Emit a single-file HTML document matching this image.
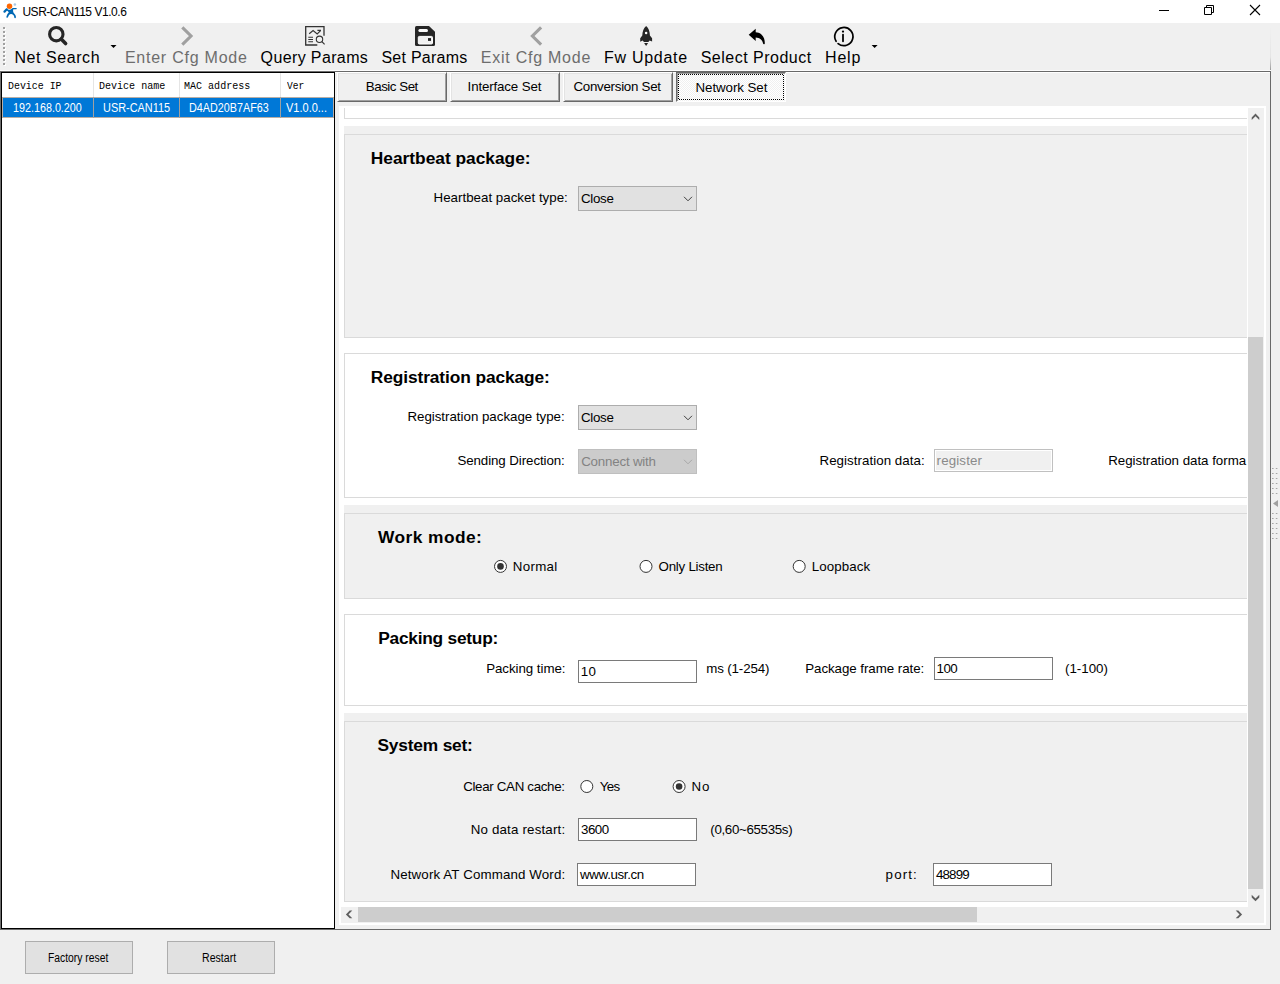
<!DOCTYPE html>
<html><head><meta charset="utf-8"><title>USR-CAN115 V1.0.6</title>
<style>
html,body{margin:0;padding:0}
body{width:1280px;height:984px;position:relative;overflow:hidden;background:#f0f0f0;font-family:"Liberation Sans",sans-serif;color:#000}
.a{position:absolute;box-sizing:border-box}
.t{position:absolute;white-space:pre;line-height:1}
svg{position:absolute;overflow:visible}
.combo{background:#e1e1e1;border:1px solid #adadad}
.combo.dis{background:#cccccc;border-color:#bfbfbf}
.inp{background:#fff;border:1px solid #7a7a7a}
.inp.dis{background:#f0f0f0;border:1px solid #c0c0c0;box-shadow:inset 0 0 0 1px #fff}
.btn{background:#e1e1e1;border:1px solid #adadad}
.tab{border-style:solid;border-width:1px;border-color:#fff #696969 #696969 #fff;box-shadow:inset 1px 1px 0 #e3e3e3,inset -1px -1px 0 #a0a0a0;background:#f0f0f0}
.wp{background:#fff;border:1px solid #dadada}
.gp{background:#f0f0f0}
.gp>i{position:absolute;left:0;top:8px;right:0;bottom:0;border:1px solid #dadada;box-sizing:border-box}
</style></head><body>

<!-- title bar -->
<div class="a" style="left:0;top:0;width:1280px;height:23px;background:#fff"></div>
<svg style="left:0;top:0" width="24" height="23" viewBox="0 0 24 23">
 <circle cx="14.9" cy="4.5" r="1.3" fill="#a9c9e6"/>
 <path d="M6.8 9.3 L4.5 11.6" stroke="#0068b4" stroke-width="2.2" stroke-linecap="round" fill="none"/>
 <path d="M6.2 8.6 C8 10.4 11 10.2 12.6 8 L16.2 8 C17 8 17 9.2 16.2 9.2 L13.3 9.3 C12.6 11.5 13.5 13 15 14.6 C15.8 15.6 16 16.6 15.9 17.6 C15.8 18.4 14.4 18.4 14.3 17.6 C14.2 16 13.4 14.4 11.4 14.1 C9.4 13.9 8.7 15.4 8 17.2 C7.7 18 6.1 17.7 6.4 16.7 C6.9 14.6 7.6 13.4 8.8 12.4 C8.3 11.2 7.2 10.6 5.6 9.9 Z" fill="#0068b4"/>
 <circle cx="9.5" cy="6.2" r="2.75" fill="#ff6600"/>
</svg>
<svg style="left:1150px;top:0" width="130" height="23" viewBox="1150 0 130 23" fill="none" stroke="#000" stroke-width="1">
 <path d="M1159 10.5 H1169"/>
 <path d="M1204.5 7.5 h7 v7 h-7 z"/>
 <path d="M1206.5 7.5 v-2 h7 v7 h-2"/>
 <path d="M1250 5 L1260 15 M1260 5 L1250 15" stroke-width="1.1"/>
</svg>

<!-- toolbar -->
<div class="a" style="left:0;top:70px;width:1271px;height:1px;background:#fcfcfc"></div>
<div class="a" style="left:1270px;top:27px;width:1px;height:43px;background:linear-gradient(#f0f0f0,#e4e4e4 70%,#9a9a9a)"></div>
<svg style="left:0;top:23px" width="10" height="47" viewBox="0 23 10 47">
 <g fill="#fff"><rect x="4" y="28" width="2" height="2"/><rect x="4" y="32" width="2" height="2"/><rect x="4" y="36" width="2" height="2"/><rect x="4" y="40" width="2" height="2"/><rect x="4" y="44" width="2" height="2"/><rect x="4" y="48" width="2" height="2"/><rect x="4" y="52" width="2" height="2"/><rect x="4" y="56" width="2" height="2"/><rect x="4" y="60" width="2" height="2"/><rect x="4" y="64" width="2" height="2"/></g>
 <g fill="#a0a0a0"><rect x="3" y="27" width="2" height="2"/><rect x="3" y="31" width="2" height="2"/><rect x="3" y="35" width="2" height="2"/><rect x="3" y="39" width="2" height="2"/><rect x="3" y="43" width="2" height="2"/><rect x="3" y="47" width="2" height="2"/><rect x="3" y="51" width="2" height="2"/><rect x="3" y="55" width="2" height="2"/><rect x="3" y="59" width="2" height="2"/><rect x="3" y="63" width="2" height="2"/></g>
</svg>
<svg style="left:0;top:23px" width="900" height="47" viewBox="0 23 900 47">
 <!-- search -->
 <circle cx="56.3" cy="34.2" r="6.7" fill="none" stroke="#262626" stroke-width="3.1"/>
 <path d="M61.4 39.3 L65.6 43.5" stroke="#262626" stroke-width="3.6" stroke-linecap="round"/>
 <path d="M110.5 45 h6 l-3 3 z" fill="#000"/>
 <!-- enter cfg chevron -->
 <path d="M182.3 27.4 L191 36 L182.3 44.6" fill="none" stroke="#a0a0a0" stroke-width="3.1"/>
 <!-- query params -->
 <g fill="none" stroke="#333" stroke-width="1.3">
  <path d="M324 35.8 V26.7 H305.7 V45 H317.3"/>
  <path d="M309.2 33.8 L313.1 30.5 L317.2 33.9 L320.6 30.6 M317.4 30.4 H321" stroke-width="1.2"/>
  <path d="M308.3 37.2 H313 M308.3 39.5 H313 M308.3 41.8 H313" stroke-width="1.1"/>
  <circle cx="319.5" cy="39.3" r="3.2" stroke-width="1.1"/>
  <path d="M321.9 41.7 L324.6 44.4" stroke-width="1.2"/>
 </g>
 <!-- set params floppy -->
 <path d="M416.5 26 H429 L435 31.8 V44.4 Q435 45.9 433.5 45.9 H416.5 Q415 45.9 415 44.4 V27.5 Q415 26 416.5 26 Z" fill="#262626"/>
 <rect x="418.4" y="28.9" width="9.6" height="3.1" rx="1.5" fill="#fafafa"/>
 <rect x="418.3" y="36.4" width="14.2" height="7.6" rx="1" fill="#f0f0f0" stroke="#fff" stroke-width="1"/>
 <rect x="428" y="38.1" width="3" height="2.8" fill="#222"/>
 <!-- exit cfg chevron -->
 <path d="M541.1 27.4 L532.4 36 L541.1 44.6" fill="none" stroke="#a0a0a0" stroke-width="3.1"/>
 <!-- rocket -->
 <path d="M646.15 25.9 C648.6 28 649.9 31.5 649.9 35.6 L652.1 38.2 V41.6 L649.6 40.6 L648.4 42 H643.9 L642.7 40.6 L640.2 41.8 V38.2 L642.3 35.6 C642.3 31.5 643.7 28 646.15 25.9 Z" fill="#262626"/>
 <circle cx="646.15" cy="33.1" r="1.25" fill="#fff"/>
 <path d="M644.1 43.1 H648.1 L646.1 46 Z" fill="#262626"/>
 <!-- reply arrow -->
 <path d="M748.7 34.8 L755.7 28.7 V32.2 C761.5 32.4 764.8 37 764.8 43.2 C764.8 44.4 763.2 44.5 763 43.3 C762.4 40 759.8 37.6 755.7 37.5 V41 Z" fill="#000"/>
 <!-- info -->
 <path d="M838.1 43.6 A9.1 9.1 0 1 0 836.1 41.3" fill="none" stroke="#000" stroke-width="1.7" stroke-linecap="round"/>
 <circle cx="843" cy="31.6" r="1.15" fill="#000"/>
 <path d="M843 34.6 V41.3" stroke="#000" stroke-width="1.8" stroke-linecap="round"/>
 <path d="M871.6 45 h6 l-3 3 z" fill="#000"/>
</svg>

<!-- left list -->
<div class="a" style="left:0;top:71px;width:335px;height:859px;background:#6d6d6d"></div>
<div class="a" style="left:1px;top:72px;width:334px;height:857px;background:#fff;border:1px solid #000"></div>
<div class="a" style="left:93px;top:73px;width:1px;height:24px;background:#e5e5e5"></div>
<div class="a" style="left:179px;top:73px;width:1px;height:24px;background:#e5e5e5"></div>
<div class="a" style="left:280px;top:73px;width:1px;height:24px;background:#e5e5e5"></div>
<div class="a" style="left:2px;top:97px;width:332px;height:21px;background:#0078d7;border:1px solid #b8aea6"></div>
<div class="a" style="left:93px;top:97px;width:1px;height:21px;background:#a0a0a0"></div>
<div class="a" style="left:179px;top:97px;width:1px;height:21px;background:#a0a0a0"></div>
<div class="a" style="left:280px;top:97px;width:1px;height:21px;background:#a0a0a0"></div>

<!-- tab frame -->
<div class="a" style="left:335px;top:71px;width:936px;height:859px;border:1px solid #696969;border-left:none;box-shadow:inset 0 1px 0 #fff"></div>
<!-- tabs -->
<div class="a tab" style="left:337px;top:72px;width:110px;height:30px"></div>
<div class="a tab" style="left:450px;top:72px;width:110px;height:30px"></div>
<div class="a tab" style="left:563px;top:72px;width:110px;height:30px"></div>
<div class="a" style="left:676px;top:72px;width:110px;height:30px;border-style:solid;border-width:1px;border-color:#696969 #fff #fff #696969;box-shadow:inset 1px 1px 0 #a0a0a0;background-image:conic-gradient(#fff 25%,#f0f0f0 0 50%,#fff 0 75%,#f0f0f0 0);background-size:2px 2px"></div>
<div class="a" style="left:678px;top:74px;width:106px;height:1px;background:repeating-linear-gradient(90deg,#000 0 1px,transparent 1px 2px)"></div>
<div class="a" style="left:678px;top:99px;width:106px;height:1px;background:repeating-linear-gradient(90deg,transparent 0 1px,#000 1px 2px)"></div>
<div class="a" style="left:678px;top:74px;width:1px;height:26px;background:repeating-linear-gradient(180deg,#000 0 1px,transparent 1px 2px)"></div>
<div class="a" style="left:783px;top:74px;width:1px;height:26px;background:repeating-linear-gradient(180deg,transparent 0 1px,#000 1px 2px)"></div>

<!-- scroll area -->
<div class="a" style="left:339px;top:106px;width:927px;height:819px;background:#fff"></div>
<div class="a" style="left:341px;top:108px;width:906px;height:799px;overflow:hidden;background:#fff">
 <div class="a wp" style="left:3px;top:-20px;width:1100px;height:31px"></div>
 <div class="a gp" style="left:3px;top:18px;width:1100px;height:212px"><i></i></div>
 <div class="a wp" style="left:3px;top:245px;width:1100px;height:145px"></div>
 <div class="a gp" style="left:3px;top:397px;width:1100px;height:94px"><i></i></div>
 <div class="a wp" style="left:3px;top:506px;width:1100px;height:92px"></div>
 <div class="a gp" style="left:3px;top:605px;width:1100px;height:189px"><i></i></div>

 <!-- heartbeat -->
 <div class="a combo" style="left:237px;top:78px;width:119px;height:25px"></div>
 <!-- registration -->
 <div class="a combo" style="left:237px;top:297px;width:119px;height:25px"></div>
 <div class="a combo dis" style="left:237px;top:341px;width:119px;height:25px"></div>
 <div class="a inp dis" style="left:593px;top:341px;width:119px;height:23px"></div>
 <!-- packing -->
 <div class="a inp" style="left:237px;top:552px;width:119px;height:23px"></div>
 <div class="a inp" style="left:593px;top:549px;width:119px;height:23px"></div>
 <!-- system -->
 <div class="a inp" style="left:237px;top:710px;width:119px;height:23px"></div>
 <div class="a inp" style="left:236px;top:755px;width:119px;height:23px"></div>
 <div class="a inp" style="left:592px;top:755px;width:119px;height:23px"></div>
 <svg style="left:0;top:0" width="906" height="799" viewBox="341 108 906 799">
  <g fill="none" stroke="#404040" stroke-width="1">
   <path d="M684 196.8 L688 200.8 L692 196.8"/>
   <path d="M684 415.8 L688 419.8 L692 415.8"/>
   <path d="M684 459.8 L688 463.8 L692 459.8" stroke="#a8a8a8"/>
  </g>
  <g fill="#fff" stroke="#333" stroke-width="1">
   <circle cx="500.5" cy="566.4" r="6"/><circle cx="646" cy="566.4" r="6"/><circle cx="799.2" cy="566.4" r="6"/>
   <circle cx="586.8" cy="786.5" r="6"/><circle cx="679.1" cy="786.5" r="6"/>
  </g>
  <circle cx="500.5" cy="566.4" r="3.3" fill="#333"/><circle cx="679.1" cy="786.5" r="3.3" fill="#333"/>
 </svg>
<span class="t" style="left:29.80px;top:42px;font-size:17.33px;letter-spacing:-0.006px;font-weight:700">Heartbeat package:</span>
<span class="t" style="left:92.50px;top:83px;font-size:13.33px;letter-spacing:0.010px">Heartbeat packet type:</span>
<span class="t" style="left:240.00px;top:84px;font-size:13.33px;letter-spacing:-0.300px">Close</span>
<span class="t" style="left:29.80px;top:261px;font-size:17.33px;letter-spacing:-0.100px;font-weight:700">Registration package:</span>
<span class="t" style="left:66.40px;top:302px;font-size:13.33px;letter-spacing:-0.020px">Registration package type:</span>
<span class="t" style="left:240.00px;top:303px;font-size:13.33px;letter-spacing:-0.300px">Close</span>
<span class="t" style="left:116.40px;top:346px;font-size:13.33px;letter-spacing:-0.088px">Sending Direction:</span>
<span class="t" style="left:240.20px;top:347px;font-size:13.33px;letter-spacing:-0.200px;color:#838383">Connect with</span>
<span class="t" style="left:478.50px;top:346px;font-size:13.33px;letter-spacing:0.041px">Registration data:</span>
<span class="t" style="left:595.60px;top:346px;font-size:13.33px;letter-spacing:0.129px;color:#8a8a8a">register</span>
<span class="t" style="left:767.20px;top:346px;font-size:13.33px;letter-spacing:-0.027px">Registration data forma</span>
<span class="t" style="left:37.00px;top:421px;font-size:17.33px;letter-spacing:0.444px;font-weight:700">Work mode:</span>
<span class="t" style="left:171.75px;top:452px;font-size:13.33px;letter-spacing:0.300px">Normal</span>
<span class="t" style="left:317.60px;top:452px;font-size:13.33px;letter-spacing:-0.260px">Only Listen</span>
<span class="t" style="left:470.70px;top:452px;font-size:13.33px;letter-spacing:0.114px">Loopback</span>
<span class="t" style="left:37.20px;top:522px;font-size:17.33px;letter-spacing:-0.246px;font-weight:700">Packing setup:</span>
<span class="t" style="left:145.20px;top:554px;font-size:13.33px;letter-spacing:-0.058px">Packing time:</span>
<span class="t" style="left:239.75px;top:557px;font-size:13.33px;letter-spacing:0.250px">10</span>
<span class="t" style="left:365.20px;top:554px;font-size:13.33px;letter-spacing:-0.133px">ms (1-254)</span>
<span class="t" style="left:464.20px;top:554px;font-size:13.33px;letter-spacing:-0.056px">Package frame rate:</span>
<span class="t" style="left:595.50px;top:554px;font-size:13.33px;letter-spacing:-0.500px">100</span>
<span class="t" style="left:724.00px;top:554px;font-size:13.33px;letter-spacing:0.000px">(1-100)</span>
<span class="t" style="left:36.50px;top:629px;font-size:17.33px;letter-spacing:-0.190px;font-weight:700">System set:</span>
<span class="t" style="left:122.20px;top:672px;font-size:13.33px;letter-spacing:-0.327px">Clear CAN cache:</span>
<span class="t" style="left:258.70px;top:672px;font-size:13.33px;letter-spacing:-0.600px">Yes</span>
<span class="t" style="left:350.60px;top:672px;font-size:13.33px;letter-spacing:0.900px">No</span>
<span class="t" style="left:129.70px;top:715px;font-size:13.33px;letter-spacing:0.173px">No data restart:</span>
<span class="t" style="left:240.00px;top:715px;font-size:13.33px;letter-spacing:-0.500px">3600</span>
<span class="t" style="left:369.30px;top:715px;font-size:13.33px;letter-spacing:-0.333px">(0,60~65535s)</span>
<span class="t" style="left:49.50px;top:760px;font-size:13.33px;letter-spacing:0.122px">Network AT Command Word:</span>
<span class="t" style="left:239.10px;top:760px;font-size:13.33px;letter-spacing:-0.367px">www.usr.cn</span>
<span class="t" style="left:544.60px;top:760px;font-size:13.33px;letter-spacing:1.125px">port:</span>
<span class="t" style="left:595.10px;top:760px;font-size:13.33px;letter-spacing:-0.900px">48899</span>
</div>
<!-- v scrollbar -->
<div class="a" style="left:1248px;top:108px;width:16px;height:815px;background:#f0f0f0"></div>
<div class="a" style="left:1248px;top:337px;width:15px;height:552px;background:#cdcdcd"></div>
<!-- h scrollbar -->
<div class="a" style="left:341px;top:907px;width:907px;height:16px;background:#f0f0f0"></div>
<div class="a" style="left:358px;top:907px;width:619px;height:15px;background:#cdcdcd"></div>
<svg style="left:335px;top:100px" width="940" height="830" viewBox="335 100 940 830" fill="#5f5f5f">
 <path d="M1255.5 113.6 L1259.3 117.4 V120 L1255.5 116.2 L1251.7 120 V117.4 Z"/>
 <path d="M1255.5 901.2 L1259.3 897.4 V894.8 L1255.5 898.6 L1251.7 894.8 V897.4 Z"/>
 <path d="M345.9 914.4 L349.7 910.6 H352.3 L348.5 914.4 L352.3 918.2 H349.7 Z"/>
 <path d="M1242.1 914.4 L1238.3 910.6 H1235.7 L1239.5 914.4 L1235.7 918.2 H1238.3 Z"/>
</svg>

<!-- right collapse grip -->
<svg style="left:1270px;top:460px" width="10" height="90" viewBox="1270 460 10 90" fill="#a6a6a6"><rect x="1272" y="468" width="1.6" height="1"/><rect x="1275.8" y="468" width="1.6" height="1"/><rect x="1272" y="473" width="1.6" height="1"/><rect x="1275.8" y="473" width="1.6" height="1"/><rect x="1272" y="478" width="1.6" height="1"/><rect x="1275.8" y="478" width="1.6" height="1"/><rect x="1272" y="483" width="1.6" height="1"/><rect x="1275.8" y="483" width="1.6" height="1"/><rect x="1272" y="488" width="1.6" height="1"/><rect x="1275.8" y="488" width="1.6" height="1"/><rect x="1272" y="493" width="1.6" height="1"/><rect x="1275.8" y="493" width="1.6" height="1"/><rect x="1272" y="513" width="1.6" height="1"/><rect x="1275.8" y="513" width="1.6" height="1"/><rect x="1272" y="518" width="1.6" height="1"/><rect x="1275.8" y="518" width="1.6" height="1"/><rect x="1272" y="523" width="1.6" height="1"/><rect x="1275.8" y="523" width="1.6" height="1"/><rect x="1272" y="528" width="1.6" height="1"/><rect x="1275.8" y="528" width="1.6" height="1"/><rect x="1272" y="533" width="1.6" height="1"/><rect x="1275.8" y="533" width="1.6" height="1"/><rect x="1272" y="538" width="1.6" height="1"/><rect x="1275.8" y="538" width="1.6" height="1"/><path d="M1273 503.5 L1278 500 V507 Z" fill="#a0a0a0"/></svg>
<!-- bottom buttons -->
<div class="a btn" style="left:25px;top:941px;width:108px;height:33px"></div>
<div class="a btn" style="left:167px;top:941px;width:108px;height:33px"></div>

<span class="t" style="left:22.40px;top:6px;font-size:12px;letter-spacing:-0.463px">USR-CAN115 V1.0.6</span>
<span class="t" style="left:14.50px;top:50px;font-size:16px;letter-spacing:0.556px">Net Search</span>
<span class="t" style="left:124.90px;top:50px;font-size:16px;letter-spacing:0.762px;color:#6d6d6d">Enter Cfg Mode</span>
<span class="t" style="left:260.60px;top:50px;font-size:16px;letter-spacing:0.373px">Query Params</span>
<span class="t" style="left:381.40px;top:50px;font-size:16px;letter-spacing:0.256px">Set Params</span>
<span class="t" style="left:480.80px;top:50px;font-size:16px;letter-spacing:0.750px;color:#6d6d6d">Exit Cfg Mode</span>
<span class="t" style="left:604.10px;top:50px;font-size:16px;letter-spacing:0.700px">Fw Update</span>
<span class="t" style="left:700.70px;top:50px;font-size:16px;letter-spacing:0.492px">Select Product</span>
<span class="t" style="left:825.00px;top:50px;font-size:16px;letter-spacing:0.833px">Help</span>
<span class="t" style="left:8.14px;top:80px;font-size:11.5px;transform-origin:0 0;transform:scaleX(0.8623);font-family:'Liberation Mono',monospace">Device IP</span>
<span class="t" style="left:99.13px;top:80px;font-size:11.5px;transform-origin:0 0;transform:scaleX(0.8730);font-family:'Liberation Mono',monospace">Device name</span>
<span class="t" style="left:184.13px;top:80px;font-size:11.5px;transform-origin:0 0;transform:scaleX(0.8730);font-family:'Liberation Mono',monospace">MAC address</span>
<span class="t" style="left:287.00px;top:80px;font-size:11.5px;transform-origin:0 0;transform:scaleX(0.8300);font-family:'Liberation Mono',monospace">Ver</span>
<span class="t" style="left:13.04px;top:102px;font-size:12.5px;transform-origin:0 0;transform:scaleX(0.8608);color:#fff">192.168.0.200</span>
<span class="t" style="left:102.63px;top:102px;font-size:12.5px;transform-origin:0 0;transform:scaleX(0.8733);color:#fff">USR-CAN115</span>
<span class="t" style="left:189.34px;top:102px;font-size:12.5px;transform-origin:0 0;transform:scaleX(0.8637);color:#fff">D4AD20B7AF63</span>
<span class="t" style="left:285.90px;top:102px;font-size:12.5px;transform-origin:0 0;transform:scaleX(0.8800);color:#fff">V1.0.0...</span>
<span class="t" style="left:365.80px;top:80px;font-size:13.33px;letter-spacing:-0.475px">Basic Set</span>
<span class="t" style="left:467.60px;top:80px;font-size:13.33px;letter-spacing:-0.150px">Interface Set</span>
<span class="t" style="left:573.40px;top:80px;font-size:13.33px;letter-spacing:-0.269px">Conversion Set</span>
<span class="t" style="left:695.50px;top:81px;font-size:13.33px;letter-spacing:-0.070px">Network Set</span>
<span class="t" style="left:47.77px;top:952px;font-size:12.5px;transform-origin:0 0;transform:scaleX(0.8264)">Factory reset</span>
<span class="t" style="left:202.15px;top:952px;font-size:12.5px;transform-origin:0 0;transform:scaleX(0.8462)">Restart</span>
</body></html>
